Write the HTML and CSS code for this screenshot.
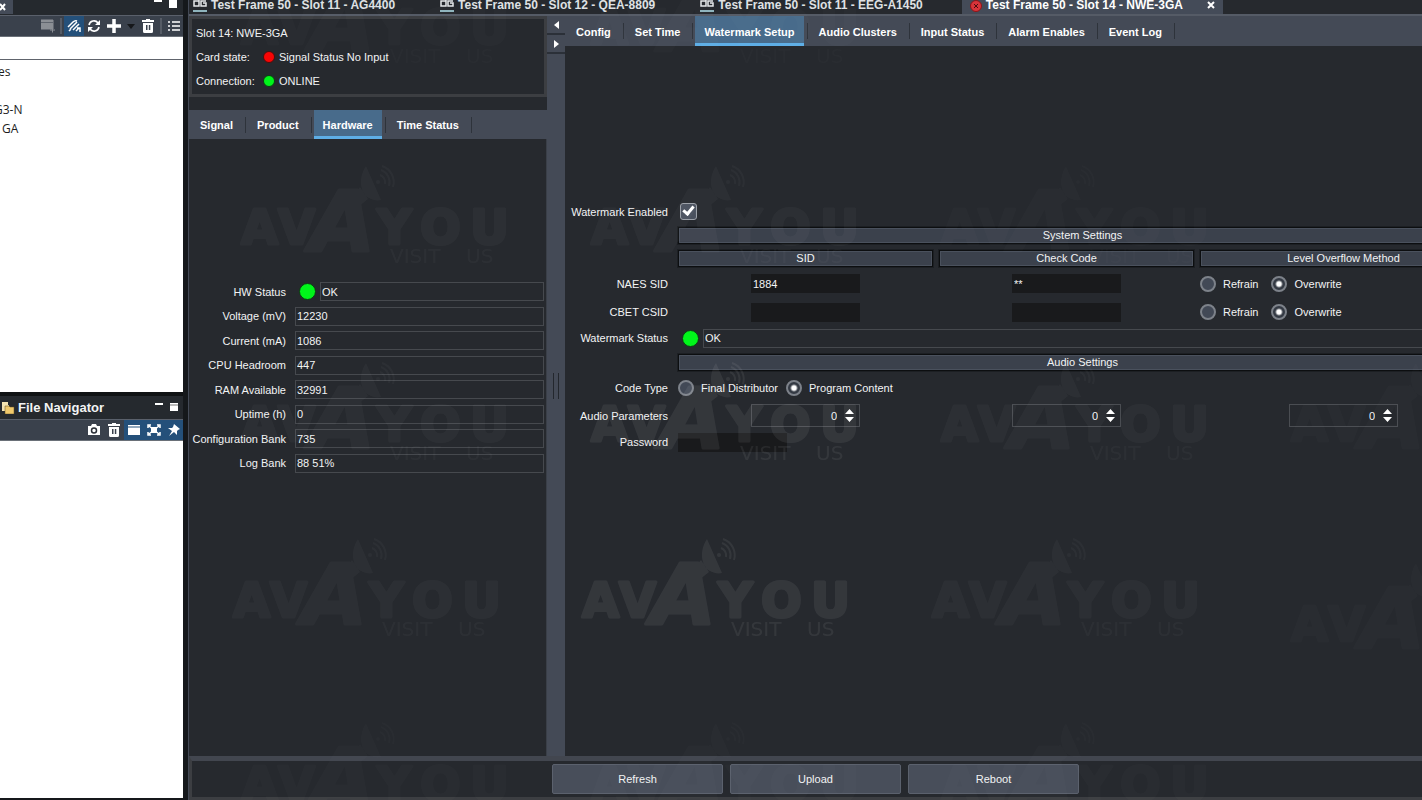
FILE: index.html
```html
<!DOCTYPE html>
<html lang="en">
  <head>
    <meta charset="UTF-8" />
    <meta name="viewport" content="width=device-width, initial-scale=1.0" />
    <title>Test Frame 50 - Slot 14 - NWE-3GA</title>
    <link rel="stylesheet" href="styles.css">
  </head>
  <body>
    <!-- shared icons -->
    <svg class="defs" aria-hidden="true">
      <symbol id="i-device" viewBox="0 0 14 12">
        <path d="M1 1h5v5H1zM6 1V-3M13 1H8v5h5V3h-3" fill="none" stroke="#e6e9ec" stroke-width="1.5" />
        <path d="M0 10h14v2H0z" fill="#8fb4bd" />
      </symbol>
      <symbol id="i-trash" viewBox="0 0 14 14">
        <path d="M5 0h4v1h4v2H1V1h4zM2 4h10v8.500a1.500 1.500 0 0 1-1.500 1.500h-7A1.500 1.500 0 0 1 2 12.500zM5 6v5h1.500V6zM7.800 6v5h1.500V6z" fill="#fff" fill-rule="evenodd" />
      </symbol>
      <symbol id="i-window" viewBox="0 0 14 14">
        <path d="M1 2h12v1.500H1zM1 4.500h12V12H1z" fill="#fff" />
      </symbol>
      <symbol id="i-spin" viewBox="0 0 9 13">
        <path d="M4.500 0L9 5H0zM0 8h9l-4.500 5z" fill="#fff" />
      </symbol>
      <symbol id="mark" viewBox="0 0 280 110" overflow="visible">
        <text class="mark-word" x="1" y="79" font-size="48">A</text>
        <text class="mark-word" x="38" y="79" font-size="48">V</text>
        <text class="mark-word mark-big" x="70" y="86" font-size="84">A</text>
        <text class="mark-word" x="137" y="79" font-size="48">Y</text>
        <text class="mark-word" x="180" y="79" font-size="48">O</text>
        <text class="mark-word" x="230" y="79" font-size="48">U</text>
        <text class="mark-sub" x="150" y="98" font-size="20">VISIT</text>
        <text class="mark-sub" x="226" y="98" font-size="20">US</text>
        <path d="M126 1c-8 12-6 27 3 32 4 2 8 3 12 2zM110 34l10-12 4 6 4 6-10 8z" />
        <circle cx="138" cy="17" r="2" />
        <path d="M140 10a8 8 0 0 1 5 9M141 5a13 13 0 0 1 8 16M142 1a17 17 0 0 1 11 21" fill="none" stroke="currentColor" stroke-width="2" />
      </symbol>
    </svg>

    <div class="workbench">
      <aside class="sidebar">
        <section class="view">
          <div class="view-stub">
            <button class="stub-close" aria-label="Close view"><svg width="6" height="8" viewBox="0 0 6 8"><path d="M0 1l5 6M5 1L0 7" stroke="#fff" stroke-width="2" /></svg></button>
            <svg class="minmax" width="24" height="9" viewBox="0 0 24 9"><path d="M0 0h8v2H0zM15 0h8v8h-8z" fill="#fff" /></svg>
          </div>
          <div class="toolbar">
            <button class="tool" aria-label="New window"><svg width="14" height="14" viewBox="0 0 14 14"><path d="M0 1h12v9H0zM9 11h5M11.500 8.500v5" fill="#8b8f95" stroke="#8b8f95" /><path d="M0 3.500h12" stroke="#5f656e" /></svg></button>
            <span class="tool-sep"></span>
            <button class="tool on" aria-label="Link with editor"><svg width="14" height="14" viewBox="0 0 14 14"><path d="M1 8l5-5q2-2 4-1M3 10l7-7M6 11l6-6M2 12l2-2M9 12l3-3M10 9h3v4" fill="none" stroke="#fff" stroke-width="1.500" /></svg></button>
            <button class="tool" aria-label="Refresh view"><svg width="14" height="14" viewBox="0 0 14 14"><path d="M2 6a5 5 0 0 1 9-2M12 8a5 5 0 0 1-9 2" fill="none" stroke="#fff" stroke-width="1.600" /><path d="M13 1v5H8zM1 13V8h5z" fill="#fff" /></svg></button>
            <button class="tool" aria-label="Add"><svg width="14" height="14" viewBox="0 0 14 14"><path d="M7 0v14M0 7h14" stroke="#fff" stroke-width="3.500" /></svg></button>
            <button class="tool narrow" aria-label="Add menu"><svg width="8" height="5" viewBox="0 0 8 5"><path d="M0 0h8L4 5z" fill="#15171a" /></svg></button>
            <button class="tool" aria-label="Delete"><svg width="14" height="14"><use href="#i-trash" /></svg></button>
            <span class="tool-sep"></span>
            <button class="tool" aria-label="List"><svg width="12" height="12" viewBox="0 0 12 12"><path d="M0 2h2M4 2h8M0 6h2M4 6h8M0 10h2M4 10h8" stroke="#fff" stroke-width="1.500" /></svg></button>
          </div>
          <div class="filter-row"></div>
          <ul class="tree">
            <li class="root">es</li>
            <li>&nbsp;</li>
            <li class="node">G3-N</li>
            <li class="leaf">GA</li>
          </ul>
        </section>
        <section class="view files">
          <header class="view-head">
            <svg width="14" height="12" viewBox="0 0 14 12"><path d="M1 0h6v3h1v6H1z" fill="#f4e3b0" /><path d="M4 4h4l1 1h4v7H4z" fill="#f0c96c" stroke="#5c4a20" stroke-width=".500" /></svg>
            <h2>File Navigator</h2>
            <svg class="minmax" width="24" height="9" viewBox="0 0 24 9"><path d="M0 0h8v2H0zM15 0h8v8h-8z" fill="#fff" /><path d="M15 2h8" stroke="#777" /></svg>
          </header>
          <div class="toolbar">
            <button class="tool" aria-label="Snapshot"><svg width="12" height="12" viewBox="0 0 12 12"><path d="M0 2h3l1-2h4l1 2h3v9H0z" fill="#fff" /><circle cx="6" cy="6.500" r="2.500" fill="#fff" stroke="#2b3038" stroke-width="1.500" /></svg></button>
            <button class="tool" aria-label="Delete file"><svg width="14" height="14"><use href="#i-trash" /></svg></button>
            <button class="tool on" aria-label="Window"><svg width="14" height="14"><use href="#i-window" /></svg></button>
            <button class="tool on" aria-label="Expand"><svg width="14" height="14" viewBox="0 0 14 14"><path d="M1 5V2h3M10 2h3v3M13 9v3h-3M4 12H1V9M2 3l10 8M12 3L2 11" fill="none" stroke="#fff" stroke-width="1.500" /><path d="M4 4h6v6H4z" fill="#fff" /></svg></button>
            <button class="tool on" aria-label="Pin"><svg width="12" height="12" viewBox="0 0 12 12"><path d="M6 0l6 5-2 1-1 1v4L6 8l-5 4 3-5-4-3h4l1-1z" fill="#fff" /></svg></button>
          </div>
          <div class="file-list"></div>
        </section>
      </aside>

      <main class="editor">
        <nav class="editor-tabs">
          <button><svg width="14" height="12"><use href="#i-device" /></svg>Test Frame 50 - Slot 11 - AG4400</button>
          <button><svg width="14" height="12"><use href="#i-device" /></svg>Test Frame 50 - Slot 12 - QEA-8809</button>
          <button><svg width="14" height="12"><use href="#i-device" /></svg>Test Frame 50 - Slot 11 - EEG-A1450</button>
          <button class="active"><svg width="12" height="12" viewBox="0 0 12 12"><circle cx="6" cy="6" r="5.500" fill="#d8343a" stroke="#8e1519" /><path d="M4 4l4 4M8 4L4 8" stroke="#4a0d10" /></svg>Test Frame 50 - Slot 14 - NWE-3GA<svg class="tab-close" width="8" height="8" viewBox="0 0 8 8"><path d="M1 1l6 6M7 1L1 7" stroke="#fff" stroke-width="2" /></svg></button>
        </nav>

        <div class="panes">
          <section class="card-pane">
            <dl class="card-info">
              <div class="slot"><dt>Slot 14: NWE-3GA</dt></div>
              <div><dt>Card state:</dt><dd><i class="dot red"></i>Signal Status No Input</dd></div>
              <div><dt>Connection:</dt><dd><i class="dot"></i>ONLINE</dd></div>
            </dl>
            <nav class="tabs">
              <button>Signal</button>
              <button>Product</button>
              <button class="active">Hardware</button>
              <button>Time Status</button>
            </nav>
            <form class="hardware">
              <label for="hwStatus">HW Status</label>
              <div class="status"><i class="led"></i><input id="hwStatus" value="OK" readonly></div>
              <label for="voltage">Voltage (mV)</label>
              <input id="voltage" value="12230" readonly>
              <label for="current">Current (mA)</label>
              <input id="current" value="1086" readonly>
              <label for="cpu">CPU Headroom</label>
              <input id="cpu" value="447" readonly>
              <label for="ram">RAM Available</label>
              <input id="ram" value="32991" readonly>
              <label for="uptime">Uptime (h)</label>
              <input id="uptime" value="0" readonly>
              <label for="confBank">Configuration Bank</label>
              <input id="confBank" value="735" readonly>
              <label for="logBank">Log Bank</label>
              <input id="logBank" value="88 51%" readonly>
            </form>
          </section>

          <div class="splitter">
            <button aria-label="Collapse left"><svg width="5" height="8" viewBox="0 0 5 8"><path d="M5 0v8L0 4z" fill="#fff" /></svg></button>
            <button aria-label="Collapse right"><svg width="5" height="8" viewBox="0 0 5 8"><path d="M0 0v8l5-4z" fill="#fff" /></svg></button>
            <span class="grip"></span>
          </div>

          <section class="setup-pane">
            <nav class="tabs">
              <button>Config</button>
              <button>Set Time</button>
              <button class="active">Watermark Setup</button>
              <button>Audio Clusters</button>
              <button>Input Status</button>
              <button>Alarm Enables</button>
              <button>Event Log</button>
            </nav>
            <form class="setup">
              <label for="wmEnabled">Watermark Enabled</label>
              <div class="wide"><input type="checkbox" id="wmEnabled" checked></div>

              <h3 class="wide bar">System Settings</h3>

              <h4 class="bar first">SID</h4>
              <h4 class="bar">Check Code</h4>
              <h4 class="bar">Level Overflow Method</h4>

              <label for="naesSid">NAES SID</label>
              <input class="box" id="naesSid" value="1884">
              <input class="box" aria-label="NAES check code" value="**">
              <div class="radios spaced">
                <label><input type="radio" name="naesMethod">Refrain</label>
                <label><input type="radio" name="naesMethod" checked>Overwrite</label>
              </div>

              <label for="cbetCsid">CBET CSID</label>
              <input class="box" id="cbetCsid">
              <input class="box" aria-label="CBET check code">
              <div class="radios spaced">
                <label><input type="radio" name="cbetMethod">Refrain</label>
                <label><input type="radio" name="cbetMethod" checked>Overwrite</label>
              </div>

              <label for="wmStatus">Watermark Status</label>
              <div class="wide status"><i class="led"></i><input id="wmStatus" value="OK" readonly></div>

              <h3 class="wide bar">Audio Settings</h3>

              <span class="caption">Code Type</span>
              <div class="wide radios">
                <label><input type="radio" name="codeType">Final Distributor</label>
                <label><input type="radio" name="codeType" checked>Program Content</label>
              </div>

              <label for="audio1">Audio Parameters</label>
              <div class="spinner"><input type="number" id="audio1" value="0"><svg width="9" height="13"><use href="#i-spin" /></svg></div>
              <div class="spinner"><input type="number" aria-label="Audio parameter 2" value="0"><svg width="9" height="13"><use href="#i-spin" /></svg></div>
              <div class="spinner"><input type="number" aria-label="Audio parameter 3" value="0"><svg width="9" height="13"><use href="#i-spin" /></svg></div>

              <label for="password">Password</label>
              <div class="wide"><input type="password" class="box" id="password"></div>
            </form>
          </section>
        </div>

        <footer class="actions">
          <button>Refresh</button>
          <button>Upload</button>
          <button>Reboot</button>
        </footer>
      </main>
    </div>

    <svg class="marks" aria-hidden="true">
      <g opacity=".25">
        <use href="#mark" x="240" y="-35" width="280" height="110" />
        <use href="#mark" x="590" y="-35" width="280" height="110" />
        <use href="#mark" x="940" y="165" width="280" height="110" />
        <use href="#mark" x="1290" y="362" width="280" height="110" />
        <use href="#mark" x="1290" y="562" width="280" height="110" />
        <use href="#mark" x="240" y="722" width="280" height="110" />
        <use href="#mark" x="590" y="722" width="280" height="110" />
        <use href="#mark" x="940" y="722" width="280" height="110" />
      </g>
      <g opacity=".5">
        <use href="#mark" x="240" y="165" width="280" height="110" />
        <use href="#mark" x="590" y="165" width="280" height="110" />
        <use href="#mark" x="240" y="362" width="280" height="110" />
        <use href="#mark" x="940" y="362" width="280" height="110" />
        <use href="#mark" x="232" y="538" width="280" height="110" />
        <use href="#mark" x="931" y="538" width="280" height="110" />
      </g>
      <use href="#mark" x="590" y="362" width="280" height="110" />
      <use href="#mark" x="581" y="538" width="280" height="110" />
    </svg>
  </body>
</html>
```
FILE: styles.css
```css
* {
  box-sizing: border-box;
}
body {
  margin: 0;
  position: relative;
  overflow: hidden;
  background-color: #26292e;
  color: #f2f3f4;
  font: 11px "Liberation Sans", Arial, sans-serif;
}
button,
input {
  margin: 0;
  padding: 0;
  border: none;
  background: none;
  color: inherit;
  font: inherit;
}
h2,
h3,
h4,
ul,
dl,
dd {
  margin: 0;
  padding: 0;
}
svg {
  display: block;
  flex: none;
}
.defs {
  position: absolute;
  width: 0;
  height: 0;
}
.workbench {
  display: flex;
  min-height: 100vh;
}

/* Left side views */
.sidebar {
  flex: 0 0 188px;
  display: flex;
  flex-direction: column;
  border-right: 5px solid #15181b;
  border-bottom: 2px solid #15181b;
  overflow: hidden;
}
.view {
  flex: 0 0 396px;
  display: flex;
  flex-direction: column;
  border-bottom: 4px solid #101214;
  background-color: white;
}
.files {
  flex: 1;
  border-bottom: none;
}
.view-stub {
  display: flex;
  align-items: flex-start;
  justify-content: space-between;
  height: 16px;
  padding-right: 5px;
  background-color: #25292e;
  border-bottom: 1px solid #5a606b;
}
.stub-close {
  width: 13px;
  height: 14px;
  background-color: #444b58;
}
.view-head {
  display: flex;
  align-items: center;
  gap: 3px;
  height: 24px;
  padding: 0 4px 0 1px;
  background-color: #25292e;
  border-bottom: 1px solid #5a606b;
}
.view-head h2 {
  flex: 1;
  font-size: 13px;
}
.toolbar {
  display: flex;
  justify-content: flex-end;
  align-items: center;
  height: 21px;
  margin-right: -1px;
  background-color: #3a414c;
  border-bottom: 1px solid #6a7078;
}
.tool {
  display: flex;
  align-items: center;
  justify-content: center;
  width: 20px;
  height: 20px;
}
.tool.narrow {
  width: 14px;
}
.tool.on {
  background-color: #24507a;
}
.tool-sep {
  width: 2px;
  height: 16px;
  margin: 0 2px;
  background-color: #565c66;
}
.filter-row {
  height: 23px;
  border-bottom: 1px solid #60646c;
}
.tree {
  padding-top: 2px;
  list-style: none;
  color: #1c1c1c;
  font: 12px/19px "Open Sans", "Noto Sans", sans-serif;
}
.tree .root {
  margin-left: -2px;
}
.tree .node {
  margin-left: -6px;
}
.tree .leaf {
  margin-left: 2px;
}

/* Editor area */
.editor {
  flex: 1;
  min-width: 0;
  display: flex;
  flex-direction: column;
  overflow: hidden;
  border-left: 1px solid #444a56;
}
.editor-tabs {
  display: flex;
  height: 16px;
  overflow: hidden;
  padding-left: 4px;
  border-bottom: 2px solid #555b66;
}
.editor-tabs button {
  flex: none;
  display: flex;
  align-items: flex-start;
  gap: 4px;
  height: 14px;
  padding-right: 45px;
  font-size: 12px;
  font-weight: bold;
  line-height: 10px;
  color: #dfe1e4;
  white-space: nowrap;
}
.editor-tabs .active {
  margin-left: -6px;
  padding: 0 8px;
  background-color: #444b58;
  color: white;
}
.tab-close {
  margin: 1px 0 0 20px;
}
.panes {
  flex: 1;
  display: flex;
}
.card-pane {
  flex: 0 0 358px;
  display: flex;
  flex-direction: column;
}
.card-info {
  height: 81px;
  margin-bottom: 13px;
  padding: 2px 4px;
  border: 3px solid #3c3e42;
  line-height: 24px;
}
.card-info div {
  display: flex;
}
.card-info dt {
  flex: 0 0 67px;
}
.card-info .slot dt {
  flex: 1;
}
.card-info dd {
  display: flex;
  align-items: center;
  gap: 4px;
}
.dot,
.led {
  flex: none;
  border-radius: 50%;
  background-color: #00f51a;
  border: 1px solid #0c3d12;
}
.dot {
  width: 12px;
  height: 12px;
}
.led {
  width: 17px;
  height: 17px;
}
.dot.red {
  background-color: #f80505;
  border-color: #4a0d0d;
}

.tabs {
  display: flex;
  height: 30px;
  padding-left: 2px;
  background-color: #444a56;
}
.card-pane .tabs {
  height: 29px;
}
.tabs button {
  position: relative;
  flex: none;
  padding: 4px 9px 0;
  margin-right: 6px;
  border-bottom: 3px solid transparent;
  font-weight: bold;
  color: white;
}
.tabs button::after {
  content: "";
  position: absolute;
  right: -4px;
  top: 7px;
  width: 1px;
  height: 16px;
  background-color: #2e333b;
}
.tabs .active {
  background-color: #486b8b;
  border-bottom-color: #5eaee6;
}

.hardware {
  flex: 1;
  display: grid;
  grid-template-columns: 97px 1fr;
  grid-template-rows: repeat(4, 25px 24px);
  column-gap: 9px;
  align-items: center;
  padding: 140px 2px 0 0;
  border-right: 1px solid #3a3f48;
}
.hardware > label {
  text-align: right;
}
.hardware input,
.status input {
  width: 100%;
  min-width: 0;
  height: 19px;
  padding-left: 1px;
  border: 1px solid #46494e;
}
.status {
  display: flex;
  align-items: center;
  gap: 4px;
  padding-left: 4px;
}

.splitter {
  flex: 0 0 18px;
  display: flex;
  flex-direction: column;
  align-items: center;
  background-color: #444a56;
}
.splitter button {
  display: flex;
  align-items: center;
  justify-content: center;
  width: 18px;
  height: 19px;
  border-bottom: 2px solid #2b3038;
}
.grip {
  width: 6px;
  height: 26px;
  margin: auto 0;
  border: solid #23272d;
  border-width: 0 1px;
}
/* keeps the grip centred on the pane, not on the space under the arrows */
.splitter::after {
  content: "";
  height: 38px;
}

.setup-pane {
  flex: 1;
  min-width: 0;
}
.setup {
  display: grid;
  grid-template-columns: 103px minmax(255px, 1fr) minmax(255px, 1fr) minmax(287px, 1fr);
  grid-template-rows: 23px 25px 21px 29px 28px 24px 24px 27px 29px 24px;
  column-gap: 6px;
  align-items: center;
  padding: 154px 0 20px 4px;
}
.setup > label,
.caption {
  grid-column: 1;
  padding-right: 4px;
  text-align: right;
  white-space: nowrap;
}
.wide {
  grid-column: 2 / 5;
}
.bar {
  height: 17px;
  border: 1px solid #0c0e10;
  outline: 1px solid #1c1f23;
  background-color: #3b414c;
  box-shadow: inset 0 0 0 1px #4a515d;
  font-size: 11px;
  font-weight: normal;
  line-height: 15px;
  text-align: center;
}
.bar.first {
  grid-column: 2;
}
.box {
  display: block;
  justify-self: center;
  width: 109px;
  height: 19px;
  padding-left: 2px;
  background-color: #191a1c;
}
.wide .box {
  justify-self: start;
}
.setup input[type="checkbox"] {
  appearance: none;
  display: block;
  width: 17px;
  height: 17px;
  margin-left: 2px;
  border: 1px solid #9a9fa7;
  border-radius: 3px;
  background: #4a515e;
}
.setup input[type="checkbox"]:checked::after {
  content: "";
  display: block;
  width: 4px;
  height: 8px;
  margin: 0 0 0 4px;
  border: solid white;
  border-width: 0 3px 3px 0;
  transform: rotate(40deg);
}
.radios {
  display: flex;
  gap: 8px;
}
.radios.spaced {
  gap: 13px;
}
.radios label {
  display: flex;
  align-items: center;
  gap: 7px;
}
.radios input {
  appearance: none;
  width: 16px;
  height: 16px;
  border: 2px solid #7d828a;
  border-radius: 50%;
  background: #424956;
}
.radios input:checked {
  background: radial-gradient(circle, white 2px, #343a44 4px);
}
.spinner {
  justify-self: center;
  display: flex;
  align-items: center;
  width: 109px;
  height: 23px;
  padding-right: 5px;
  border: 1px solid #4a4d52;
}
.spinner input {
  flex: 1;
  min-width: 0;
  padding-right: 8px;
  text-align: right;
  appearance: textfield;
}
.spinner input::-webkit-inner-spin-button {
  display: none;
}

.actions {
  flex: none;
  display: flex;
  justify-content: center;
  gap: 7px;
  height: 44px;
  margin-right: -20px;
  padding: 3px;
  border: 3px solid #3c3e42;
  border-top: 5px solid #42464f;
}
.actions button {
  width: 171px;
  height: 30px;
  border: 1px solid #5b616d;
  border-radius: 2px;
  background-color: #484e5a;
}

/* Brand mark laid over the panels */
.marks {
  position: absolute;
  inset: 0;
  width: 100%;
  height: 100%;
  overflow: hidden;
  pointer-events: none;
  color: white;
  fill: white;
  opacity: 0.07;
}
.mark-word {
  font-family: "DejaVu Sans", sans-serif;
  font-weight: bold;
  stroke: white;
  stroke-width: 3px;
  stroke-linejoin: round;
}
.mark-big {
  font-style: oblique;
}
.mark-sub {
  font-family: "DejaVu Sans", sans-serif;
}
```
